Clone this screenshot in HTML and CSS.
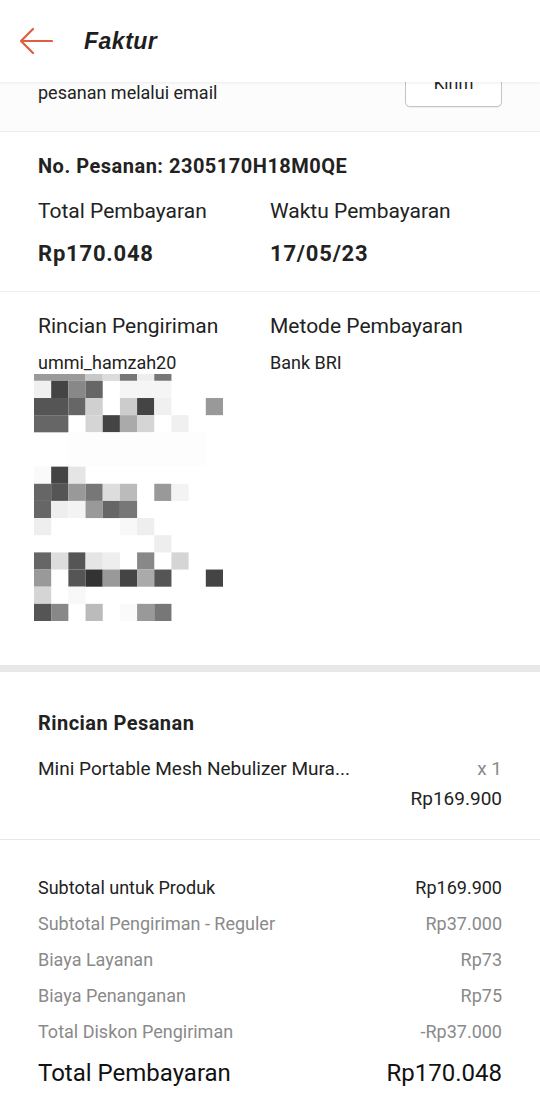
FILE: index.html
```html
<!DOCTYPE html>
<html lang="id">
<head>
    <meta charset="UTF-8">
    <meta name="viewport" content="width=device-width, initial-scale=1.0">
    <title>Faktur</title>
    <link rel="stylesheet" href="styles.css">
</head>
<body>
    <header class="topbar">
        <svg class="back-icon" width="34" height="30" viewBox="0 0 34 30">
            <path d="M33 15 H2 M14 3 L2 15 L14 27" fill="none" stroke="#dd5f3e" stroke-width="2.2" stroke-linecap="round" stroke-linejoin="round"/>
        </svg>
        <h1>Faktur</h1>
    </header>

    <section class="email-row">
        <div class="email-text">pesanan melalui email</div>
        <button class="send-button">Kirim</button>
    </section>

    <section class="order-info">
        <div class="order-no">No. Pesanan: 2305170H18M0QE</div>
        <div class="two-col">
            <div>
                <div class="label">Total Pembayaran</div>
                <div class="value">Rp170.048</div>
            </div>
            <div>
                <div class="label">Waktu Pembayaran</div>
                <div class="value">17/05/23</div>
            </div>
        </div>
    </section>

    <section class="shipping">
        <div class="two-col">
            <div>
                <div class="label">Rincian Pengiriman</div>
                <div class="small">ummi_hamzah20</div>
                <svg class="mosaic" width="189" height="247" viewBox="0 -0.4 11 14.4" preserveAspectRatio="none">
                    <!-- strip under the name -->
                    <rect x="0" y="-0.4" width="3" height="0.4" fill="#9a9a9a"/>
                    <rect x="3" y="-0.4" width="1" height="0.4" fill="#c8c8c8"/>
                    <rect x="4" y="-0.4" width="1" height="0.4" fill="#dcdcdc"/>
                    <rect x="5" y="-0.4" width="1" height="0.4" fill="#777"/>
                    <rect x="6" y="-0.4" width="1" height="0.4" fill="#eee"/>
                    <rect x="7" y="-0.4" width="1" height="0.4" fill="#777"/>
                    <!-- row 1 -->
                    <rect x="0" y="0" width="1" height="1" fill="#f0f0f0"/>
                    <rect x="1" y="0" width="1" height="1" fill="#444"/>
                    <rect x="2" y="0" width="1" height="1" fill="#888"/>
                    <rect x="3" y="0" width="1" height="1" fill="#666"/>
                    <rect x="5" y="0" width="3" height="1" fill="#f5f5f5"/>
                    <!-- row 2 -->
                    <rect x="0" y="1" width="2" height="1" fill="#555"/>
                    <rect x="2" y="1" width="1" height="1" fill="#666"/>
                    <rect x="3" y="1" width="1" height="1" fill="#d0d0d0"/>
                    <rect x="5" y="1" width="1" height="1" fill="#ccc"/>
                    <rect x="6" y="1" width="1" height="1" fill="#444"/>
                    <rect x="7" y="1" width="1" height="1" fill="#f0f0f0"/>
                    <rect x="10" y="1" width="1" height="1" fill="#999"/>
                    <!-- row 3 -->
                    <rect x="0" y="2" width="2" height="1" fill="#666"/>
                    <rect x="3" y="2" width="1" height="1" fill="#d5d5d5"/>
                    <rect x="4" y="2" width="1" height="1" fill="#444"/>
                    <rect x="5" y="2" width="1" height="1" fill="#aaa"/>
                    <rect x="6" y="2" width="1" height="1" fill="#d5d5d5"/>
                    <rect x="8" y="2" width="1" height="1" fill="#f0f0f0"/>
                    <!-- rows 4-5 -->
                    <rect x="2" y="3" width="8" height="2" fill="#fdfdfd"/>
                    <!-- row 6 -->
                    <rect x="0" y="5" width="1" height="1" fill="#fafafa"/>
                    <rect x="1" y="5" width="1" height="1" fill="#444"/>
                    <rect x="2" y="5" width="1" height="1" fill="#e5e5e5"/>
                    <!-- row 7 -->
                    <rect x="0" y="6" width="1" height="1" fill="#666"/>
                    <rect x="1" y="6" width="1" height="1" fill="#555"/>
                    <rect x="2" y="6" width="1" height="1" fill="#999"/>
                    <rect x="3" y="6" width="1" height="1" fill="#777"/>
                    <rect x="4" y="6" width="1" height="1" fill="#ddd"/>
                    <rect x="5" y="6" width="1" height="1" fill="#bbb"/>
                    <rect x="7" y="6" width="1" height="1" fill="#999"/>
                    <rect x="8" y="6" width="1" height="1" fill="#f3f3f3"/>
                    <!-- row 8 -->
                    <rect x="0" y="7" width="1" height="1" fill="#666"/>
                    <rect x="1" y="7" width="1" height="1" fill="#eee"/>
                    <rect x="2" y="7" width="1" height="1" fill="#f3f3f3"/>
                    <rect x="3" y="7" width="1" height="1" fill="#999"/>
                    <rect x="4" y="7" width="1" height="1" fill="#666"/>
                    <rect x="5" y="7" width="1" height="1" fill="#777"/>
                    <!-- rows 9-10 -->
                    <rect x="0" y="8" width="1" height="1" fill="#eee"/>
                    <rect x="5" y="8" width="1" height="1" fill="#f8f8f8"/>
                    <rect x="6" y="8" width="1" height="1" fill="#eee"/>
                    <rect x="7" y="9" width="1" height="1" fill="#eee"/>
                    <!-- row 11 -->
                    <rect x="0" y="10" width="1" height="1" fill="#666"/>
                    <rect x="1" y="10" width="1" height="1" fill="#ddd"/>
                    <rect x="2" y="10" width="1" height="1" fill="#555"/>
                    <rect x="3" y="10" width="1" height="1" fill="#e5e5e5"/>
                    <rect x="4" y="10" width="1" height="1" fill="#eee"/>
                    <rect x="6" y="10" width="1" height="1" fill="#888"/>
                    <rect x="8" y="10" width="1" height="1" fill="#d5d5d5"/>
                    <!-- row 12 -->
                    <rect x="0" y="11" width="1" height="1" fill="#999"/>
                    <rect x="2" y="11" width="1" height="1" fill="#555"/>
                    <rect x="3" y="11" width="1" height="1" fill="#333"/>
                    <rect x="4" y="11" width="1" height="1" fill="#999"/>
                    <rect x="5" y="11" width="1" height="1" fill="#444"/>
                    <rect x="6" y="11" width="1" height="1" fill="#aaa"/>
                    <rect x="7" y="11" width="1" height="1" fill="#555"/>
                    <rect x="10" y="11" width="1" height="1" fill="#444"/>
                    <!-- row 13 -->
                    <rect x="0" y="12" width="1" height="1" fill="#d5d5d5"/>
                    <rect x="2" y="12" width="1" height="1" fill="#f8f8f8"/>
                    <!-- row 14 -->
                    <rect x="0" y="13" width="1" height="1" fill="#555"/>
                    <rect x="1" y="13" width="1" height="1" fill="#888"/>
                    <rect x="3" y="13" width="1" height="1" fill="#bbb"/>
                    <rect x="5" y="13" width="1" height="1" fill="#fafafa"/>
                    <rect x="6" y="13" width="1" height="1" fill="#999"/>
                    <rect x="7" y="13" width="1" height="1" fill="#777"/>
                </svg>
            </div>
            <div>
                <div class="label">Metode Pembayaran</div>
                <div class="small">Bank BRI</div>
            </div>
        </div>
    </section>

    <div class="thick-divider"></div>

    <section class="order-items">
        <div class="section-title">Rincian Pesanan</div>
        <div class="item-row">
            <span class="item-name">Mini Portable Mesh Nebulizer Mura...</span>
            <span class="item-qty">x 1</span>
        </div>
        <div class="item-price">Rp169.900</div>
    </section>

    <section class="summary">
        <div class="sum-row main">
            <span>Subtotal untuk Produk</span>
            <span>Rp169.900</span>
        </div>
        <div class="sum-row">
            <span>Subtotal Pengiriman - Reguler</span>
            <span>Rp37.000</span>
        </div>
        <div class="sum-row">
            <span>Biaya Layanan</span>
            <span>Rp73</span>
        </div>
        <div class="sum-row">
            <span>Biaya Penanganan</span>
            <span>Rp75</span>
        </div>
        <div class="sum-row">
            <span>Total Diskon Pengiriman</span>
            <span>-Rp37.000</span>
        </div>
        <div class="sum-row total">
            <span>Total Pembayaran</span>
            <span>Rp170.048</span>
        </div>
    </section>
</body>
</html>
```

FILE: styles.css
```css
body {
    margin: 0;
    font-family: Roboto, 'Noto Sans', sans-serif;
    background-color: #fff;
    color: #222;
}

.topbar {
    display: flex;
    align-items: center;
    height: 82px;
    padding-left: 19px;
    background-color: #fff;
    box-shadow: 0 1px 3px rgba(0, 0, 0, 0.07);
    position: relative;
    z-index: 1;
}

.topbar h1 {
    margin: 0 0 0 31px;
    font-family: 'Liberation Sans', sans-serif;
    font-size: 23px;
    font-style: italic;
    font-weight: bold;
    color: #1e1e1e;
    letter-spacing: 0.5px;
}

/* partly scrolled under the header */
.email-row {
    box-sizing: border-box;
    display: flex;
    justify-content: space-between;
    align-items: flex-end;
    height: 50px;
    padding: 0 38px 25px;
    overflow: hidden;
    background-color: #fcfcfc;
    border-bottom: 1px solid #ededed;
}

.email-text {
    flex-shrink: 0;
    font-size: 18px;
    line-height: 22px;
    margin-bottom: 2px;
}

.send-button {
    flex-shrink: 0;
    width: 97px;
    height: 48px;
    font-family: Roboto, sans-serif;
    font-size: 17px;
    color: #222;
    background-color: #fff;
    border: 1px solid #c4c4c4;
    border-radius: 5px;
    box-shadow: 0 1px 1px rgba(0, 0, 0, 0.06);
    margin-bottom: -1px;
}

.order-info {
    padding: 22px 38px 24px;
    border-bottom: 1px solid #ededed;
}

.order-no {
    font-size: 20px;
    font-weight: bold;
    line-height: 24px;
    letter-spacing: 0.5px;
    margin-bottom: 20px;
}

.two-col {
    display: grid;
    grid-template-columns: 232px 1fr;
}

.label {
    font-size: 21px;
    line-height: 26px;
}

.value {
    font-size: 22px;
    font-weight: bold;
    line-height: 26px;
    letter-spacing: 0.8px;
    margin-top: 17px;
}

.shipping {
    padding: 21px 38px 44px;
}

.small {
    font-size: 18px;
    line-height: 20px;
    margin-top: 14px;
}

.mosaic {
    display: block;
    margin: 1px 0 0 -4px;
}

.thick-divider {
    height: 7px;
    background-color: #e8e8e8;
}

.order-items {
    padding: 39px 38px 28px;
    border-bottom: 1px solid #e8e8e8;
}

.section-title {
    font-size: 20px;
    font-weight: bold;
    line-height: 24px;
    letter-spacing: 0.45px;
    margin-bottom: 22px;
}

.item-row {
    display: flex;
    justify-content: space-between;
    font-size: 19px;
    line-height: 24px;
}

.item-qty {
    color: #8a8a8a;
}

.item-price {
    text-align: right;
    font-size: 19px;
    line-height: 24px;
    margin-top: 6px;
}

.summary {
    padding: 30px 38px 40px;
}

.sum-row {
    display: flex;
    justify-content: space-between;
    font-size: 18px;
    line-height: 36px;
    color: #8a8a8a;
}

.sum-row.main {
    color: #222;
}

.sum-row.total {
    font-size: 24px;
    line-height: 46px;
    color: #111;
}
```
